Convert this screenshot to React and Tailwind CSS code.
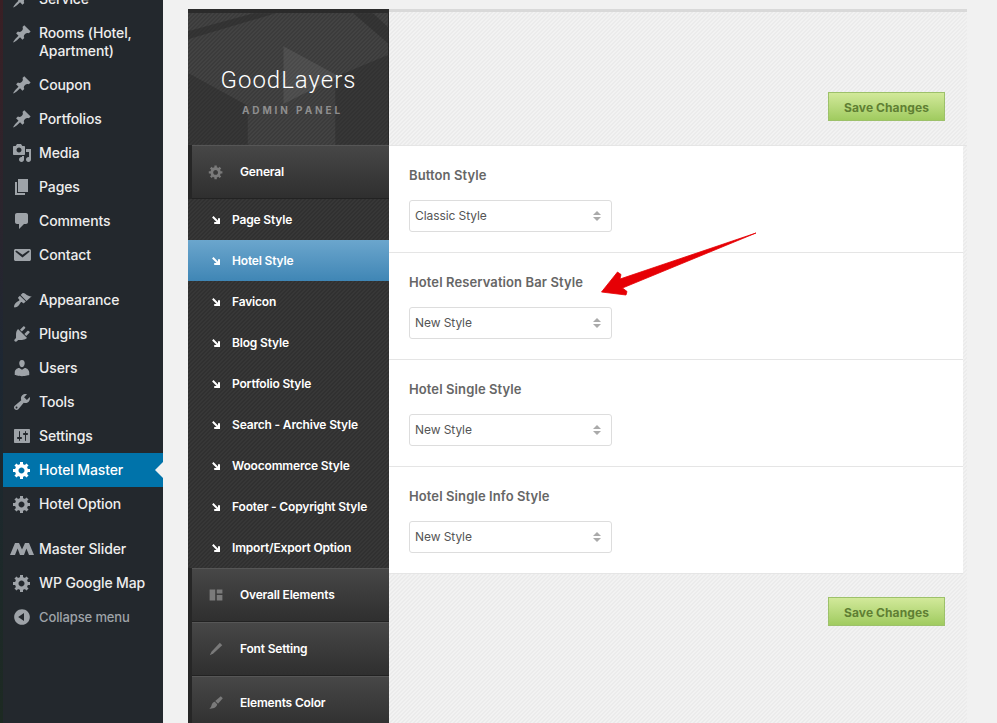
const D = {
  pin: "M10.44 3.02l1.82-1.82 6.36 6.35-1.83 1.82c-1.05-.68-2.48-.57-3.41.36l-.75.75c-.92.93-1.04 2.35-.35 3.41l-1.83 1.82-2.41-2.41-2.8 2.79c-.42.42-3.38 2.71-3.8 2.29s1.86-3.39 2.28-3.81l2.79-2.79L4.1 9.36l1.83-1.82c1.05.69 2.48.57 3.41-.36l.75-.75c.93-.92 1.04-2.35.35-3.41z",
  media: "M13 11V4c0-.55-.45-1-1-1h-1.67L9 1H5L3.67 3H2c-.55 0-1 .45-1 1v7c0 .55.45 1 1 1h10c.55 0 1-.45 1-1zM7 4.5c1.38 0 2.5 1.12 2.5 2.5S8.38 9.5 7 9.5 4.5 8.38 4.5 7 5.62 4.5 7 4.5zM14 6h5v10.5c0 1.38-1.12 2.5-2.5 2.5S14 17.88 14 16.5s1.12-2.5 2.5-2.5c.17 0 .34.02.5.05V9h-3V6zm-4 8.05V13h2v3.5c0 1.38-1.12 2.5-2.5 2.5S7 17.88 7 16.5 8.12 14 9.5 14c.17 0 .34.02.5.05z",
  page: "M6 15V2h10v13H6zm-1 1h8v2H3V5h2v11z",
  comment: "M5 2h9c1.1 0 2 .9 2 2v7c0 1.1-.9 2-2 2h-2l-5 5v-5H5c-1.1 0-2-.9-2-2V4c0-1.1.9-2 2-2z",
  email: "M3.87 4h13.25C18.37 4 19 4.59 19 5.79v8.42c0 1.19-.63 1.79-1.88 1.79H3.87c-1.25 0-1.88-.6-1.88-1.79V5.79c0-1.2.63-1.79 1.88-1.79zm6.62 8.6l6.74-5.53c.24-.2.43-.66.13-1.07-.29-.41-.82-.42-1.17-.17l-5.7 3.86L4.8 5.83c-.35-.25-.88-.24-1.17.17-.3.41-.11.87.13 1.07z",
  brush: "M14.5 10.9L8.6 5l1.6-1.6c.6-.5 2-.4 3 .3s1.3 1.1 2.6 1.8c1 .6 2.2 1.1 3.9.8zM13.8 11.6L7.9 5.7 6.3 7.3c-.3.3-.3.9 0 1.2l.9.9c.3.3.3.9 0 1.2-.5.5-2.7 1.6-3.5 2.4-1.3 1.3-1.9 3.1-1.6 4.3 1.2.3 3-.3 4.3-1.6.8-.8 1.9-3 2.4-3.5.3-.3.9-.3 1.2 0l.9.9c.3.3.9.3 1.2 0z",
  brush2: "M16 1.500l2.500 2.500-6 7-3.500-3.500zM8.500 8.500l3 3c-.5 3.500-4.500 6-10 5.500 2.500-1.500 2.500-3 3-4.500.6-2.300 2.500-3.800 4-4z",
  plug: "M13.11 4.36L9.87 7.6 8 5.73l3.24-3.24c.35-.34 1.05-.2 1.56.32.52.51.66 1.21.31 1.55zm-8 1.77l.91-1.12 9.01 9.01-1.19.84c-.71.71-2.63 1.16-3.82 1.16H6.14L4.9 17.26c-.59.59-1.54.59-2.12 0-.59-.58-.59-1.53 0-2.12l1.24-1.24v-3.88c0-1.13.4-3.19 1.09-3.89zm7.26 3.97l3.24-3.24c.34-.35 1.04-.21 1.55.31.52.51.66 1.21.31 1.55l-3.24 3.25z",
  user: "M10 9.25c-2.27 0-2.73-3.44-2.73-3.44C7 4.02 7.82 2 9.97 2c2.16 0 2.98 2.02 2.71 3.81 0 0-.41 3.44-2.68 3.44zm0 2.57L12.72 10c2.39 0 4.52 2.33 4.52 4.53v2.49s-3.65 1.13-7.24 1.13c-3.65 0-7.24-1.13-7.24-1.13v-2.49c0-2.25 1.94-4.48 4.47-4.48z",
  tool: "M16.68 9.77c-1.34 1.34-3.3 1.67-4.95.99l-5.41 6.52c-.99.99-2.59.99-3.58 0s-.99-2.59 0-3.57l6.52-5.42c-.68-1.65-.35-3.61.99-4.95 1.28-1.28 3.12-1.62 4.72-1.06l-2.89 2.89 2.82 2.82 2.86-2.87c.53 1.58.18 3.39-1.08 4.67zM3.81 16.21c.4.39 1.04.39 1.43 0 .4-.4.4-1.04 0-1.43-.39-.4-1.03-.4-1.43 0-.39.39-.39 1.03 0 1.43z",
  settings: "M18 16V4c0-.55-.45-1-1-1H3c-.55 0-1 .45-1 1v12c0 .55.45 1 1 1h14c.55 0 1-.45 1-1zM8 11h1c.55 0 1 .45 1 1s-.45 1-1 1H8v1.5c0 .28-.22.5-.5.5s-.5-.22-.5-.5V13H6c-.55 0-1-.45-1-1s.45-1 1-1h1V5.5c0-.28.22-.5.5-.5s.5.22.5.5V11zm5-2h-1c-.55 0-1-.45-1-1s.45-1 1-1h1V5.5c0-.28.22-.5.5-.5s.5.22.5.5V7h1c.55 0 1 .45 1 1s-.45 1-1 1h-1v5.5c0 .28-.22.5-.5.5s-.5-.22-.5-.5V9z",
  gear: "M18 12h-2.18c-.17.7-.44 1.35-.81 1.93l1.54 1.54-2.1 2.1-1.54-1.54c-.58.36-1.23.63-1.91.79V19H8v-2.18c-.68-.16-1.33-.43-1.91-.79l-1.54 1.54-2.12-2.12 1.54-1.54c-.36-.58-.63-1.23-.79-1.91H1V9.03h2.17c.16-.7.44-1.35.8-1.94L2.43 5.55l2.1-2.1 1.54 1.54c.58-.37 1.24-.64 1.93-.81V2h3v2.18c.68.16 1.33.43 1.91.79l1.54-1.54 2.12 2.12-1.54 1.54c.36.59.64 1.24.8 1.94H18V12zm-8.5 1.5c1.66 0 3-1.34 3-3s-1.34-3-3-3-3 1.34-3 3 1.34 3 3 3z",
  collapse: "M10 2.16c4.33 0 7.84 3.51 7.84 7.84s-3.51 7.84-7.84 7.84S2.16 14.33 2.16 10 5.71 2.16 10 2.16zm2 11.72V6.12L6.18 9.97z",
  slider: "M0 16L5 4h4l3 6.5L15 4h4l5 12h-5l-2.6-6.5L14 16h-4L7.6 9.5 5 16z",
  layout: "M2 3h7v14H2zM11 3h7v5h-7zM11 10h7v7h-7z",
  pencil: "M14.8 2.2l3 3L6.6 15.6 2.3 17.7l2-4.4z",
};

const MENU = [
  { label: "Service", icon: "pin" },
  { label: "Rooms (Hotel, Apartment)", icon: "pin", two: true },
  { label: "Coupon", icon: "pin" },
  { label: "Portfolios", icon: "pin" },
  { label: "Media", icon: "media" },
  { label: "Pages", icon: "page" },
  { label: "Comments", icon: "comment" },
  { label: "Contact", icon: "email" },
  { sep: true },
  { label: "Appearance", icon: "brush" },
  { label: "Plugins", icon: "plug" },
  { label: "Users", icon: "user" },
  { label: "Tools", icon: "tool" },
  { label: "Settings", icon: "settings" },
  { label: "Hotel Master", icon: "gear", active: true },
  { label: "Hotel Option", icon: "gear" },
  { sep: true },
  { label: "Master Slider", icon: "slider", wide: true },
  { label: "WP Google Map", icon: "gear" },
  { label: "Collapse menu", icon: "collapse", dim: true },
];

const SUBS = ["Page Style", "Hotel Style", "Favicon", "Blog Style", "Portfolio Style", "Search - Archive Style", "Woocommerce Style", "Footer - Copyright Style", "Import/Export Option"];

const FIELDS = [
  { title: "Button Style", value: "Classic Style" },
  { title: "Hotel Reservation Bar Style", value: "New Style" },
  { title: "Hotel Single Style", value: "New Style" },
  { title: "Hotel Single Info Style", value: "New Style" },
];

// 4px tile so the diagonal lines stay crisp
const LIGHT = "bg-[linear-gradient(135deg,#f2f2f2_25%,#ebebeb_25%,#ebebeb_50%,#f2f2f2_50%,#f2f2f2_75%,#ebebeb_75%)] bg-[length:4px_4px]";
const DARK = "bg-[linear-gradient(135deg,#373737_25%,#303030_25%,#303030_50%,#373737_50%,#373737_75%,#303030_75%)] bg-[length:4px_4px]";
const LOGO = "bg-[linear-gradient(135deg,#434343_25%,#3b3b3b_25%,#3b3b3b_50%,#434343_50%,#434343_75%,#3b3b3b_75%)] bg-[length:4px_4px]";

function Icon({ name, className, wide }) {
  return (
    <svg viewBox={wide ? "0 0 24 20" : "0 0 20 20"} className={className} fill="currentColor" aria-hidden="true">
      <path d={D[name]} fillRule="evenodd" />
    </svg>
  );
}

function Sidebar() {
  return (
    <aside className="w-[160px] shrink-0 bg-[#23282d] -mt-[18px] font-['Inter',sans-serif] text-[14px] font-medium">
      {MENU.map((m, i) => {
        if (m.sep) return <div key={i} className="h-[11px]" />;
        return (
          <div
            key={m.label}
            className={`relative flex pl-[9px] ${m.two ? "h-[52px] items-start pt-[8px]" : "h-[34px] items-center"} ${m.active ? "bg-[#0073aa] text-white" : m.dim ? "text-[#9ea3a8]" : "text-[#eeeeee]"}`}
          >
            <Icon
              name={m.icon}
              wide={m.wide}
              className={`shrink-0 ${m.wide ? "w-[24px] h-[20px] -ml-[2px] mr-[5px]" : "w-[20px] h-[20px] mr-[7px]"} ${m.active ? "text-white" : "text-[#9ea3a8]"}`}
            />
            <span className={`leading-[18px] tracking-[-0.12px] ${m.dim ? "text-[13px]" : ""}`}>{m.label}</span>
            {m.active && (
              <span className="absolute right-0 top-[9px] w-0 h-0 border-y-[8px] border-y-transparent border-r-[8px] border-r-[#f1f1f1]" />
            )}
          </div>
        );
      })}
    </aside>
  );
}

function MainItem({ icon, label }) {
  return (
    <div className="h-[54px] pl-[4px] bg-[#262626]">
      <div className="flex items-center h-full pl-[16px] bg-gradient-to-b from-[#474747] to-[#2f2f2f] border-t border-t-[#565656] border-b border-b-[#222]">
        <Icon name={icon} className="w-[16px] h-[16px] text-[#7a7a7a] mr-[16px]" />
        <span className="text-white text-[12px] font-semibold tracking-[-0.18px]">{label}</span>
      </div>
    </div>
  );
}

function SubItem({ label, active }) {
  return (
    <div className={`h-[41px] flex items-center pl-[24px] text-white text-[12px] font-semibold tracking-[-0.17px] ${active ? "bg-gradient-to-b from-[#6ba6cd] to-[#3f86b5]" : ""}`}>
      <svg viewBox="0 0 8 8" className="w-[8px] h-[8px] mt-[1px] mr-[12px]" aria-hidden="true">
        <path d="M.8 .8l5.4 5.4M7 2.200V7H2.200" fill="none" stroke="#fff" strokeWidth="2" />
      </svg>
      {label}
    </div>
  );
}

function AdminNav() {
  return (
    <div className={`w-[201px] shrink-0 h-[714px] overflow-hidden ${DARK} border-t-[4px] border-t-[#2b2b2b]`}>
      <div className={`relative h-[132px] overflow-hidden border-r border-r-[#2a2a2a] ${LOGO}`}>
        <svg viewBox="0 0 201 132" className="absolute inset-0 w-full h-full" aria-hidden="true">
          <path d="M0 26L88 0h-22L0 18zM166 0h20l15 14v16z" fill="#262626" opacity="0.45" />
          <path d="M0 60l60 33v39H0zM148 64l53-22v90h-53z" fill="#262626" opacity="0.4" />
          <path d="M96 33l55 30-55 28z" fill="#fff" opacity="0.08" />
        </svg>
        <div className="relative pt-[52px] pl-[1px] text-center text-white font-['Roboto',sans-serif] font-light text-[24px] leading-[30px] tracking-[1px]">GoodLayers</div>
        <div className="relative mt-[8px] pl-[9px] text-center text-[#8e8e8e] font-['Inter',sans-serif] font-bold text-[10px] leading-[14px] tracking-[2.9px]">ADMIN PANEL</div>
      </div>
      <MainItem icon="gear" label="General" />
      {SUBS.map((s) => <SubItem key={s} label={s} active={s === "Hotel Style"} />)}
      <MainItem icon="layout" label="Overall Elements" />
      <MainItem icon="pencil" label="Font Setting" />
      <MainItem icon="brush2" label="Elements Color" />
    </div>
  );
}

function SaveButton() {
  return (
    <button className="w-[117px] h-[29px] pt-[2px] bg-gradient-to-b from-[#d2e99a] to-[#a0cb5f] border border-[#9dc16a] text-[#5f7f33] text-[12px] font-bold tracking-[0.1px]">
      Save Changes
    </button>
  );
}

function Field({ title, value }) {
  return (
    <div className="h-[107px] pl-[20px] pt-[21px] border-b border-[#e5e5e5]">
      <div className="text-[#666] text-[13px] leading-[16px] font-semibold tracking-[0.1px]">{title}</div>
      <div className="mt-[17px] w-[203px] h-[32px] flex items-center justify-between pl-[5px] pr-[10px] bg-white border border-[#ddd] rounded-[3px] text-[#555] text-[12px] tracking-[-0.08px]">
        {value}
        <span className="flex flex-col gap-[2px]">
          <span className="w-0 h-0 border-x-[4px] border-x-transparent border-b-[4px] border-b-[#aaa]" />
          <span className="w-0 h-0 border-x-[4px] border-x-transparent border-t-[4px] border-t-[#aaa]" />
        </span>
      </div>
    </div>
  );
}

function Content() {
  return (
    <div className={`relative w-[578px] shrink-0 h-[714px] ${LIGHT} border-t-[3px] border-t-[#d9d9d9]`}>
      <div className="h-[134px] pt-[80px] pr-[22px] flex justify-end items-start border-b border-[#e5e5e5]">
        <SaveButton />
      </div>
      <div className="mr-[4px] bg-white">
        {FIELDS.map((f) => <Field key={f.title} {...f} />)}
      </div>
      <div className="pt-[23px] pr-[22px] flex justify-end">
        <SaveButton />
      </div>
      {/* red annotation arrow */}
      <svg className="absolute left-[200px] top-[210px] w-[180px] h-[80px]" viewBox="0 0 180 80" aria-hidden="true">
        <path d="M167 11L31 57l1-4.500-3.500-2.500L12.500 70l24.500 3 1-3.500-4.500-3.500z" fill="#e60005" stroke="#e60005" strokeWidth="0.8" strokeLinejoin="round" />
      </svg>
    </div>
  );
}

export default function App() {
  return (
    <div className="h-[723px] w-[997px] overflow-hidden flex bg-[#f1f1f1] font-['Inter',sans-serif]">
      <div className="w-[3px] shrink-0 bg-gradient-to-b from-[#3a1f24] via-[#1d2733] to-[#1d2a22]" />
      <Sidebar />
      <div className="ml-[25px] pt-[9px] flex items-start">
        <AdminNav />
        <Content />
      </div>
    </div>
  );
}
